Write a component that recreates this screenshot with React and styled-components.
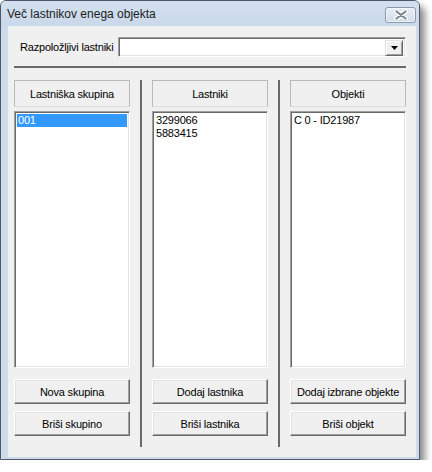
import React from "react";
import styled, { createGlobalStyle } from "styled-components";

const Global = createGlobalStyle`
  html, body {
    margin: 0;
    padding: 0;
    background: #ffffff;
  }
  body {
    font-family: "Liberation Sans", Arial, sans-serif;
    font-size: 11px;
    letter-spacing: -0.2px;
    color: #000;
  }
`;

const Window = styled.div`
  width: 420px;
  height: 460px;
  box-sizing: border-box;
  border: 1px solid #4e5866;
  border-radius: 6px 6px 0 0;
  background: #cddbeb;
  box-shadow: 5px 6px 7px rgba(0, 0, 0, 0.45);
  display: flex;
  flex-direction: column;
`;

const TitleBar = styled.div`
  height: 25px;
  display: flex;
  align-items: flex-start;
  justify-content: space-between;
  padding: 0 3px 0 6px;
  background: linear-gradient(#d3e0ef, #c9d8ea);
  border-radius: 5px 5px 0 0;
  .title {
    font-size: 12px;
    letter-spacing: 0;
    color: #1c1c1c;
    padding-top: 6px;
  }
`;

const CloseButton = styled.div`
  width: 29px;
  height: 14px;
  margin-top: 6px;
  border: 1px solid #8a99ae;
  border-radius: 3px;
  background: linear-gradient(#e8eef6, #d2dce9);
  box-shadow: inset 0 0 0 1px rgba(255, 255, 255, 0.6);
  display: flex;
  align-items: center;
  justify-content: center;
`;

const Client = styled.div`
  flex: 1;
  margin: 0 3px 2px 7px;
  background: #f0f0f0;
  padding: 11px 10px 0 6px;
  display: flex;
  flex-direction: column;
`;

const ComboRow = styled.div`
  display: flex;
  height: 20px;
  align-items: center;
  label {
    width: 98px;
    padding-left: 6px;
    white-space: nowrap;
  }
`;

const Combo = styled.div`
  flex: 1;
  height: 20px;
  box-sizing: border-box;
  background: #fff;
  border-top: 1px solid #a0a0a0;
  border-left: 1px solid #a0a0a0;
  border-right: 1px solid #fff;
  border-bottom: 1px solid #fff;
  box-shadow: inset 1px 1px 0 #696969, inset -1px -1px 0 #e3e3e3;
  display: flex;
  justify-content: flex-end;
  padding: 2px;
`;

const DropButton = styled.div`
  width: 16px;
  height: 14px;
  background: #f0f0f0;
  border-top: 1px solid #e3e3e3;
  border-left: 1px solid #e3e3e3;
  border-right: 1px solid #696969;
  border-bottom: 1px solid #696969;
  box-shadow: inset 1px 1px 0 #fff, inset -1px -1px 0 #a0a0a0;
  display: flex;
  align-items: center;
  justify-content: center;
`;

const HRule = styled.div`
  height: 2px;
  margin-top: 9px;
  background: #6a6a6a;
`;

const Columns = styled.div`
  display: flex;
  margin-top: 12px;
  height: 367px;
`;

const VRule = styled.div`
  width: 2px;
  margin: 0 10px;
  background: #6a6a6a;
`;

const Column = styled.div`
  width: 116px;
  display: flex;
  flex-direction: column;
  padding-bottom: 11px;
`;

const Header = styled.div`
  height: 27px;
  box-sizing: border-box;
  border: 1px solid #b9b9b9;
  border-bottom-color: #dcdcdc;
  display: flex;
  align-items: center;
  justify-content: center;
`;

const ListBox = styled.div`
  margin-top: 4px;
  height: 257px;
  box-sizing: border-box;
  background: #fff;
  border-top: 1px solid #a0a0a0;
  border-left: 1px solid #a0a0a0;
  border-right: 1px solid #fff;
  border-bottom: 1px solid #fff;
  box-shadow: inset 1px 1px 0 #696969, inset -1px -1px 0 #e3e3e3;
  padding: 2px 2px 0 2px;
`;

const Item = styled.div`
  height: 13px;
  line-height: 13px;
  padding-left: 1px;
  background: ${(p) => (p.selected ? "#3399ff" : "transparent")};
  color: ${(p) => (p.selected ? "#fff" : "#000")};
`;

const Button = styled.div`
  height: 25px;
  margin-top: ${(p) => p.gap}px;
  box-sizing: border-box;
  background: #f0f0f0;
  border-top: 1px solid #fff;
  border-left: 1px solid #fff;
  border-right: 1px solid #696969;
  border-bottom: 1px solid #696969;
  box-shadow: inset -1px -1px 0 #a0a0a0, inset 1px 1px 0 #e3e3e3;
  display: flex;
  align-items: center;
  justify-content: center;
  white-space: nowrap;
`;

const columns = [
  {
    title: "Lastniška skupina",
    items: ["001"],
    selected: 0,
    buttons: ["Nova skupina", "Briši skupino"],
  },
  {
    title: "Lastniki",
    items: ["3299066", "5883415"],
    selected: -1,
    buttons: ["Dodaj lastnika", "Briši lastnika"],
  },
  {
    title: "Objekti",
    items: ["C 0 - ID21987"],
    selected: -1,
    buttons: ["Dodaj izbrane objekte", "Briši objekt"],
  },
];

export default function App() {
  return (
    <>
      <Global />
      <Window>
        <TitleBar>
          <span className="title">Več lastnikov enega objekta</span>
          <CloseButton>
            <svg width="16" height="10" viewBox="0 0 16 10">
              <path d="M3.5 1.5 L12.5 8.5 M12.5 1.5 L3.5 8.5" stroke="#fff" strokeWidth="4.5" strokeLinecap="round" />
              <path d="M3.5 1.5 L12.5 8.5 M12.5 1.5 L3.5 8.5" stroke="#7d8694" strokeWidth="2.2" strokeLinecap="round" />
            </svg>
          </CloseButton>
        </TitleBar>
        <Client>
          <ComboRow>
            <label>Razpoložljivi lastniki</label>
            <Combo>
              <DropButton>
                <svg width="7" height="4" viewBox="0 0 7 4">
                  <path d="M0 0 H7 L3.5 4 Z" fill="#000" />
                </svg>
              </DropButton>
            </Combo>
          </ComboRow>
          <HRule />
          <Columns>
            {columns.map((c, i) => (
              <React.Fragment key={c.title}>
                {i > 0 && <VRule />}
                <Column>
                  <Header>{c.title}</Header>
                  <ListBox>
                    {c.items.map((it, j) => (
                      <Item key={it} selected={j === c.selected}>
                        {it}
                      </Item>
                    ))}
                  </ListBox>
                  <Button gap={11}>{c.buttons[0]}</Button>
                  <Button gap={7}>{c.buttons[1]}</Button>
                </Column>
              </React.Fragment>
            ))}
          </Columns>
        </Client>
      </Window>
    </>
  );
}
